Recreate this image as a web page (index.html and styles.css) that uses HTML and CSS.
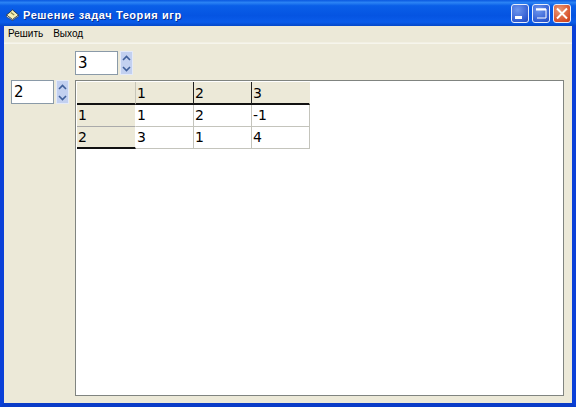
FILE: index.html
```html
<!DOCTYPE html>
<html lang="ru">
<head>
<meta charset="utf-8">
<title>Решение задач Теория игр</title>
<link rel="stylesheet" href="styles.css">
</head>
<body>
<div class="window">
  <header class="titlebar">
    <svg class="app-icon" width="15" height="12" viewBox="0 0 16 14">
      <path d="M1 7 8 1l7 6-7 5.500z" fill="#f4eeb4" stroke="#1c2a40" stroke-width="1"/>
      <path d="M1 7v2l7 4.500 7-5V7l-7 5.500z" fill="#fff" stroke="#1c2a40" stroke-width=".7"/>
      <path d="M6 4l4 3" stroke="#8a8a50" stroke-width="1.500"/>
    </svg>
    <span class="title">Решение задач Теория игр</span>
    <div class="controls">
      <span class="ctl ctl-min"><svg width="18" height="19" viewBox="0 0 18 19"><rect x="4" y="12" width="7" height="3" fill="#fff"/></svg></span>
      <span class="ctl ctl-max"><svg width="18" height="19" viewBox="0 0 18 19"><path d="M4 5h10v9H5" fill="none" stroke="#fff" stroke-width="1"/><path d="M4 5.500h10" stroke="#fff" stroke-width="2"/></svg></span>
      <span class="ctl ctl-close"><svg width="18" height="19" viewBox="0 0 18 19"><path d="M4 4.500l10 10M14 4.500l-10 10" stroke="#fff" stroke-width="2"/></svg></span>
    </div>
  </header>
  <nav class="menubar"><span>Решить</span><span>Выход</span></nav>
  <main class="client">
    <div class="top-row">
      <div class="spin">
        <div class="spin-input">3</div>
        <div class="spin-btns">
          <span class="arrow"><svg width="9" height="6" viewBox="0 0 9 6"><path d="M1 5l3.500-3.500L8 5" fill="none" stroke="#3f5f9a" stroke-width="1.600"/></svg></span>
          <span class="arrow"><svg width="9" height="6" viewBox="0 0 9 6"><path d="M1 1l3.500 3.500L8 1" fill="none" stroke="#3f5f9a" stroke-width="1.600"/></svg></span>
        </div>
      </div>
    </div>
    <div class="main-row">
      <div class="spin">
        <div class="spin-input">2</div>
        <div class="spin-btns">
          <span class="arrow"><svg width="9" height="6" viewBox="0 0 9 6"><path d="M1 5l3.500-3.500L8 5" fill="none" stroke="#3f5f9a" stroke-width="1.600"/></svg></span>
          <span class="arrow"><svg width="9" height="6" viewBox="0 0 9 6"><path d="M1 1l3.500 3.500L8 1" fill="none" stroke="#3f5f9a" stroke-width="1.600"/></svg></span>
        </div>
      </div>
      <div class="grid-box">
        <div class="grid">
          <div class="cell head corner"></div>
          <div class="cell head">1</div>
          <div class="cell head">2</div>
          <div class="cell head">3</div>
          <div class="cell side">1</div>
          <div class="cell">1</div>
          <div class="cell">2</div>
          <div class="cell">-1</div>
          <div class="cell side last">2</div>
          <div class="cell">3</div>
          <div class="cell">1</div>
          <div class="cell">4</div>
        </div>
      </div>
    </div>
  </main>
</div>
</body>
</html>
```
FILE: styles.css
```css
* { box-sizing: border-box; }
html, body { margin: 0; padding: 0; }
body { width: 576px; height: 407px; overflow: hidden; background: #0a3fd0; }
.window {
  width: 576px; height: 407px;
  display: flex; flex-direction: column;
  background: #ece9d8;
  border-left: 4px solid #0a40d8;
  border-right: 4px solid #0a40d8;
  border-bottom: 4px solid #0a3cc8;
  font-family: "Liberation Sans", Arial, sans-serif;
}
.titlebar {
  height: 26px;
  margin: 0 -4px;
  padding: 0 5px 0 5px;
  display: flex; align-items: center;
  background: linear-gradient(180deg, #0a58e0 0%, #2b83f4 10%, #0a5fe8 22%, #0554e2 60%, #0a5cea 85%, #0448c8 100%);
}
.app-icon { margin: 3px 3px 0 0; flex: none; }
.title {
  margin-top: 3px;
  color: #fff; font-weight: bold; font-size: 11px; letter-spacing: .58px;
  text-shadow: 1px 1px 0 #0a2f90;
}
.controls { margin-left: auto; display: flex; gap: 3px; }
.ctl {
  width: 18px; height: 19px; border: 1px solid #e8eefc; border-radius: 3px;
  display: block; overflow: hidden;
}
.ctl svg { display: block; margin: -1px; }
.ctl-min, .ctl-max { background: radial-gradient(circle at 35% 30%, #6f97ee, #2f5ad0 75%, #2248b8); }
.ctl-close { background: radial-gradient(circle at 35% 30%, #ea9a78, #d8522c 70%, #c03c18); }
.menubar {
  height: 18px; display: flex; gap: 10px; padding: 0 0 2px 4px; align-items: center;
  font-size: 10px; color: #000;
  border-bottom: 1px solid #f6f5ec;
  box-shadow: 0 -1px 0 #f2f0e4 inset;
}
.client { flex: 1; min-height: 0; display: flex; flex-direction: column; padding: 7px 8px 7px 7px; }
.top-row { padding-left: 64px; height: 29px; flex: none; }
.main-row { flex: 1; min-height: 0; display: flex; gap: 6px; align-items: flex-start; }
.spin { display: flex; gap: 2px; height: 24px; width: 58px; flex: none; }
.spin-input {
  width: 43px; height: 24px; background: #fff; border: 1px solid #8a9aa8;
  font-size: 15px; line-height: 22px; padding-left: 2px; color: #000;
  font-family: "DejaVu Sans", sans-serif;
}
.spin-btns {
  width: 13px; height: 24px; display: flex; flex-direction: column;
  background: #c2d0f0; border: 1px solid #e4eaf8;
}
.arrow { flex: 1; display: flex; align-items: center; justify-content: center; }
.grid-box {
  flex: 1; align-self: stretch; background: #fff;
  border: 1px solid #808480;
  padding: 1px;
}
.grid {
  display: grid; grid-template-columns: 59px 58px 58px 58px;
  grid-template-rows: 23px 22px 22px; width: 233px;
}
.cell {
  font-family: "DejaVu Sans", sans-serif; font-size: 14px; line-height: 20px;
  padding: 0 0 0 1px; color: #000;
  border-right: 1px solid #c4c4bc; border-bottom: 1px solid #c4c4bc;
}
.head {
  background: #ece9d8; border-right: 1px solid #222; border-bottom: 2px solid #111;
  padding-top: 1px;
}
.head:nth-child(4) { border-right-color: #ece9d8; }
.corner { border-right-color: #c8c6b8; }
.side { background: #ece9d8; border-right: 1px solid #fff; border-bottom: 1px solid #aaa; }
.last { border-bottom: 2px solid #111; }
```
